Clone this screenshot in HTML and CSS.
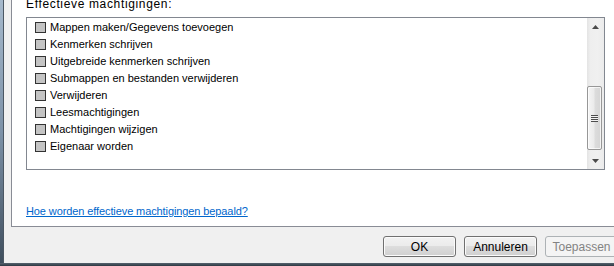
FILE: index.html
```html
<!DOCTYPE html>
<html lang="nl">
<head>
<meta charset="utf-8">
<title>Effectieve machtigingen</title>
<link rel="stylesheet" href="styles.css">
</head>
<body>
<div class="window">
  <div class="frame-left"></div>
  <div class="client">
    <div class="panel">
      <div class="label">Effectieve machtigingen:</div>
      <div class="listbox">
        <ul class="perm-list">
          <li class="perm"><span class="check"></span><span class="perm-text">Mappen maken/Gegevens toevoegen</span></li>
          <li class="perm"><span class="check"></span><span class="perm-text">Kenmerken schrijven</span></li>
          <li class="perm"><span class="check"></span><span class="perm-text">Uitgebreide kenmerken schrijven</span></li>
          <li class="perm"><span class="check"></span><span class="perm-text">Submappen en bestanden verwijderen</span></li>
          <li class="perm"><span class="check"></span><span class="perm-text">Verwijderen</span></li>
          <li class="perm"><span class="check"></span><span class="perm-text">Leesmachtigingen</span></li>
          <li class="perm"><span class="check"></span><span class="perm-text">Machtigingen wijzigen</span></li>
          <li class="perm"><span class="check"></span><span class="perm-text">Eigenaar worden</span></li>
        </ul>
        <div class="scrollbar">
          <div class="sb-btn"><svg width="7" height="4" viewBox="0 0 7 4"><polygon points="3.5,0 7,4 0,4" fill="#4a4a4a"/></svg></div>
          <div class="sb-track"><div class="sb-thumb"><span class="grip"></span></div></div>
          <div class="sb-btn"><svg width="7" height="4" viewBox="0 0 7 4"><polygon points="0,0 7,0 3.5,4" fill="#4a4a4a"/></svg></div>
        </div>
      </div>
      <a class="help-link" href="#">Hoe worden effectieve machtigingen bepaald?</a>
    </div>
    <div class="buttons">
      <button class="btn" type="button">OK</button>
      <button class="btn" type="button">Annuleren</button>
      <button class="btn" type="button" disabled>Toepassen</button>
    </div>
  </div>
</div>
<div class="frame-bottom"></div>
</body>
</html>
```
FILE: styles.css
```css
html, body {
  margin: 0;
  padding: 0;
  height: 266px;
  overflow: hidden;
  background: #f0f0f0;
}
body {
  width: 614px;
  font-family: "Liberation Sans", Arial, sans-serif;
  font-size: 11px;
  color: #000;
}
.window {
  display: flex;
  width: 630px;
  height: 263px;
}
.frame-left {
  flex: none;
  width: 3px;
  background: linear-gradient(#a6b9cc, #7d92a8 50%, #3f4e5d);
  border-right: 1px solid #4b5763;
}
.client {
  flex: 1;
  display: flex;
  flex-direction: column;
  padding-left: 7px;
}
.panel {
  background: #fff;
  border-left: 1px solid #898c95;
  border-bottom: 1px solid #898c95;
  padding: 0 0 7px 14px;
}
.label {
  margin-top: -3px;
  height: 14px;
  line-height: 14px;
  font-size: 12px;
  letter-spacing: 0.65px;
  white-space: nowrap;
}
.listbox {
  margin-top: 6px;
  width: 579px;
  height: 153px;
  box-sizing: border-box;
  border: 1px solid #828790;
  display: flex;
  background: #fff;
}
.perm-list {
  flex: 1;
  list-style: none;
  margin: 0;
  padding: 1px 0 0 8px;
}
.perm {
  display: flex;
  align-items: center;
  height: 17px;
  line-height: 17px;
  white-space: nowrap;
}
.check {
  flex: none;
  width: 9px;
  height: 9px;
  border: 1px solid #333;
  background: #c4c4c4;
  margin-right: 4px;
}
.scrollbar {
  flex: none;
  width: 17px;
  display: flex;
  flex-direction: column;
  background: linear-gradient(90deg, #e4e4e4, #eeeeee 20%, #f0f0f0 60%, #ebebeb);
}
.sb-btn {
  height: 17px;
  display: flex;
  align-items: center;
  justify-content: center;
}
.sb-btn svg { display: block; }
.sb-track {
  flex: 1;
  padding-top: 51px;
}
.sb-thumb {
  width: 15px;
  height: 64px;
  box-sizing: border-box;
  border: 1px solid #979797;
  border-radius: 2px;
  background: linear-gradient(90deg, #f5f5f5, #ebebeb 45%, #dcdcdc 55%, #d5d5d5);
  box-shadow: inset 0 0 0 1px rgba(255, 255, 255, 0.7);
  display: flex;
  align-items: center;
  justify-content: center;
}
.grip {
  display: block;
  width: 7px;
  height: 7px;
  background: repeating-linear-gradient(#4d4d4d 0 1px, #f2f2f2 1px 2px);
}
.help-link {
  display: block;
  width: max-content;
  margin-top: 34px;
  line-height: 15px;
  letter-spacing: -0.1px;
  color: #0066cc;
  text-decoration: underline;
}
.buttons {
  display: flex;
  justify-content: flex-end;
  gap: 8px;
  padding: 9px 12px 0 0;
}
.btn {
  width: 73px;
  height: 21px;
  box-sizing: border-box;
  padding: 0;
  border: 1px solid #707070;
  border-radius: 3px;
  background: linear-gradient(#f2f2f2 0%, #ebebeb 50%, #dddddd 50%, #cfcfcf 100%);
  box-shadow: inset 0 0 0 1px #fbfbfb;
  font: inherit;
  font-size: 12px;
  color: #000;
}
.btn:disabled {
  border-color: #adb2b5;
  background: #f4f4f4;
  box-shadow: none;
  color: #838383;
}
.frame-bottom {
  height: 3px;
  background: linear-gradient(#56636f, #2c3741);
}
```
